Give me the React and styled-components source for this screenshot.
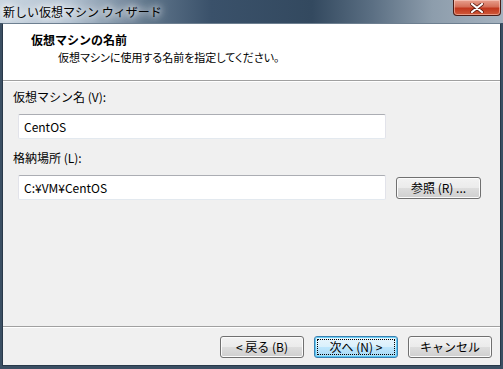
import React from "react"
import styled, { createGlobalStyle } from "styled-components"

const GlobalStyle = createGlobalStyle`
  html, body {
    margin: 0;
    padding: 0;
    background: #3b4f63;
  }
  body {
    font-family: "Noto Sans CJK JP", "Open Sans", sans-serif;
    font-size: 12px;
    color: #000;
  }
`

const App = () => {
  return (
    <>
      <GlobalStyle />
      <Window>
        <TitleBar>
          <TitleText>新しい仮想マシン ウィザード</TitleText>
          <CloseButton aria-label="close">
            <svg width="14" height="10" viewBox="0 0 14 10">
              <path
                d="M2 1 L12 9 M12 1 L2 9"
                stroke="#5a1a10"
                strokeWidth="3.6"
                strokeLinecap="round"
              />
              <path
                d="M2 1 L12 9 M12 1 L2 9"
                stroke="#fff"
                strokeWidth="2.2"
                strokeLinecap="round"
              />
            </svg>
          </CloseButton>
        </TitleBar>
        <Client>
          <Header>
            <HeaderTitle>仮想マシンの名前</HeaderTitle>
            <HeaderSub>仮想マシンに使用する名前を指定してください。</HeaderSub>
          </Header>
          <Body>
            <Label>仮想マシン名 (V):</Label>
            <Row>
              <TextBox defaultValue="CentOS" />
            </Row>
            <Label>格納場所 (L):</Label>
            <Row>
              <TextBox defaultValue="C:¥VM¥CentOS" />
              <Button $width={85}>参照 (R) ...</Button>
            </Row>
          </Body>
          <Footer>
            <Button>&lt; 戻る (B)</Button>
            <Button $primary>
              <FocusRect>次へ (N) &gt;</FocusRect>
            </Button>
            <Button>キャンセル</Button>
          </Footer>
        </Client>
      </Window>
    </>
  )
}

export default App

const Window = styled.div`
  width: 503px;
  height: 369px;
  display: flex;
  flex-direction: column;
  background: #3b4f63;
  box-sizing: border-box;
  padding: 0 2px 3px 2px;
  overflow: hidden;
`

const TitleBar = styled.div`
  height: 23px;
  margin: 0 -2px;
  display: flex;
  align-items: flex-start;
  justify-content: space-between;
  background: linear-gradient(
    to right,
    #c9d5e0 0%,
    #b3c2d1 14%,
    #5d7389 30%,
    #3a516a 42%,
    #33495f 62%,
    #5b6f83 74%,
    #8d9dac 86%,
    #a5b2bf 100%
  );
`

const TitleText = styled.div`
  padding: 4px 0 0 3px;
  font-size: 12px;
  line-height: 16px;
  color: #000;
  text-shadow: 0 0 6px #fff, 0 0 10px #fff, 0 0 12px rgba(255, 255, 255, 0.9);
`

const CloseButton = styled.div`
  width: 48px;
  height: 16px;
  margin-right: 2px;
  box-sizing: border-box;
  border: 1px solid #4a1c16;
  border-top: none;
  border-radius: 0 0 4px 4px;
  background: linear-gradient(
    to bottom,
    #e8a08e 0%,
    #d56f58 45%,
    #c1371d 55%,
    #cf5a3a 100%
  );
  box-shadow: inset 0 0 0 1px rgba(255, 220, 210, 0.5);
  display: flex;
  align-items: center;
  justify-content: center;
`

const Client = styled.div`
  flex: 1;
  display: flex;
  flex-direction: column;
  background: #f0f0f0;
  border: 1px solid #283849;
  border-top-color: #6d7f90;
`

const Header = styled.div`
  height: 57px;
  box-sizing: border-box;
  background: #fff;
  padding: 8px 0 0 28px;
  border-bottom: 1px solid #a0a0a0;
  box-shadow: 0 1px 0 #fff;
`

const HeaderTitle = styled.div`
  font-weight: bold;
  font-size: 12px;
  line-height: 16px;
`

const HeaderSub = styled.div`
  padding: 1px 0 0 27px;
  font-size: 11px;
  line-height: 16px;
  font-feature-settings: "palt";
`

const Body = styled.div`
  flex: 1;
  padding: 8px 0 0 10px;
  display: flex;
  flex-direction: column;
`

const Label = styled.div`
  line-height: 16px;
  height: 16px;
  margin-bottom: 9px;
`

const Row = styled.div`
  display: flex;
  align-items: center;
  gap: 10px;
  padding-left: 5px;
  margin-bottom: 11px;
`

const TextBox = styled.input`
  width: 368px;
  height: 25px;
  box-sizing: border-box;
  border: 1px solid #e2e3ea;
  border-top-color: #abadb3;
  border-bottom-color: #e3e9ef;
  border-radius: 2px;
  background: #fff;
  padding: 0 5px;
  font-family: inherit;
  font-size: 12px;
  color: #000;
  outline: none;
`

const Button = styled.div`
  width: ${(p) => p.$width || 84}px;
  height: 22px;
  box-sizing: border-box;
  display: flex;
  align-items: center;
  justify-content: center;
  border: 1px solid ${(p) => (p.$primary ? "#3c7fb1" : "#707070")};
  border-radius: 3px;
  background: ${(p) =>
    p.$primary
      ? "linear-gradient(to bottom, #eaf6fd 0%, #d9f0fc 50%, #bee6fd 51%, #a7d9f5 100%)"
      : "linear-gradient(to bottom, #f2f2f2 0%, #ebebeb 50%, #dddddd 51%, #cfcfcf 100%)"};
  box-shadow: inset 0 0 0 1px
    ${(p) => (p.$primary ? "rgba(48, 190, 240, 0.7)" : "#fbfbfb")};
  font-size: 12px;
  line-height: 16px;
  padding: 2px;
`

const FocusRect = styled.div`
  flex: 1;
  align-self: stretch;
  display: flex;
  align-items: center;
  justify-content: center;
  border: 1px dotted #000;
`

const Footer = styled.div`
  height: 39px;
  box-sizing: border-box;
  border-top: 1px solid #a0a0a0;
  box-shadow: inset 0 1px 0 #fff;
  display: flex;
  justify-content: flex-end;
  gap: 10px;
  padding: 9px 8px 0 0;
`
